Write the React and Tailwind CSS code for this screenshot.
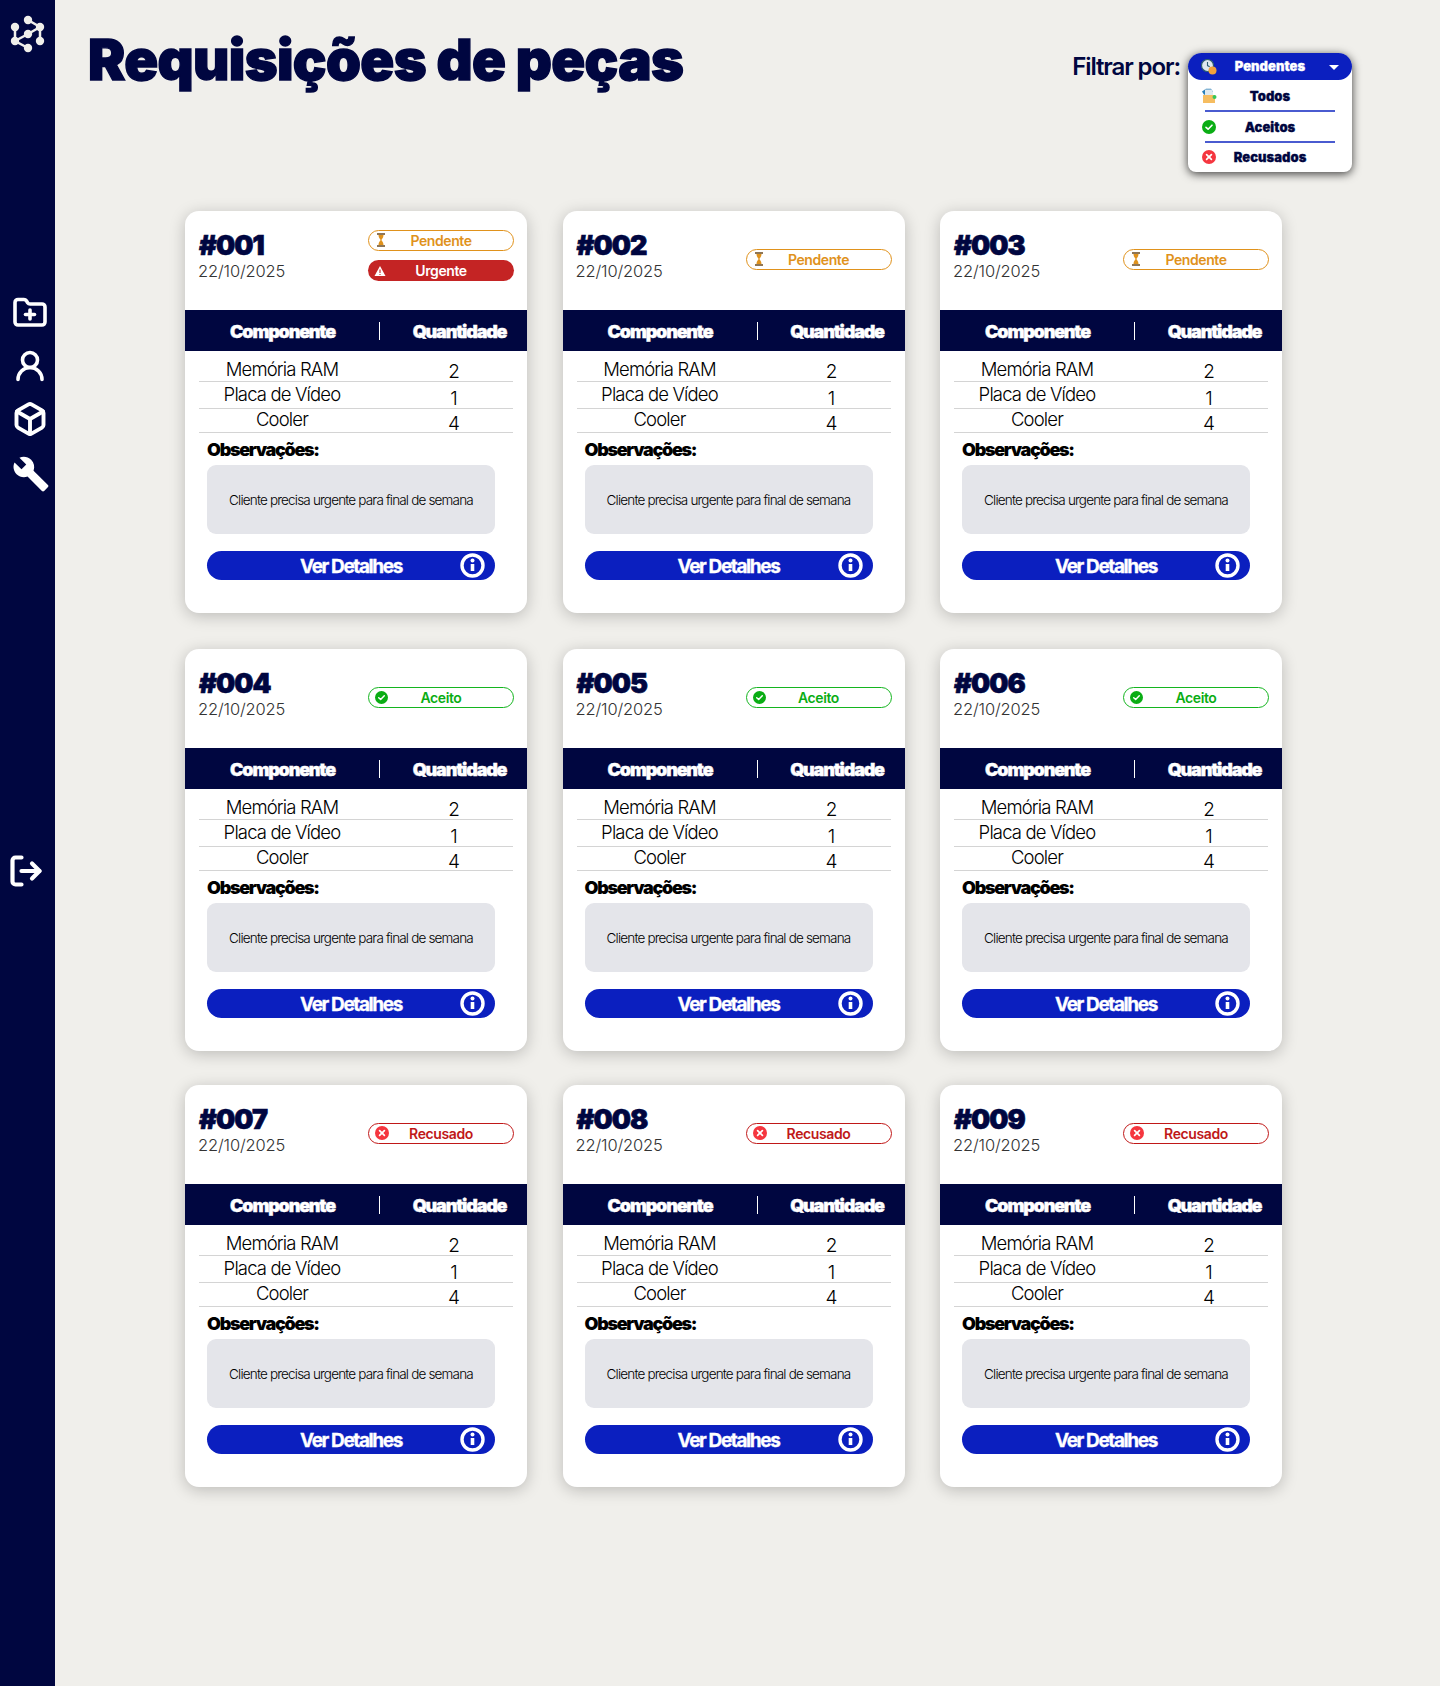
import { Box, FolderPlus, LogOut, UserRound } from "lucide-react";
import React from "react";
import { MdBuild } from "react-icons/md";

const requests = [
  { id: "#001", status: "pendente", urgent: true, gap: "" },
  { id: "#002", status: "pendente", gap: "" },
  { id: "#003", status: "pendente", gap: "" },
  { id: "#004", status: "aceito", gap: "mt-[36px]" },
  { id: "#005", status: "aceito", gap: "mt-[36px]" },
  { id: "#006", status: "aceito", gap: "mt-[36px]" },
  { id: "#007", status: "recusado", gap: "mt-[34px]" },
  { id: "#008", status: "recusado", gap: "mt-[34px]" },
  { id: "#009", status: "recusado", gap: "mt-[34px]" },
];

const rows = [
  { name: "Memória RAM", qty: 2, row: "h-[31px]", namePad: "pt-[8px]", qtyPad: "pt-[11px]" },
  { name: "Placa de Vídeo", qty: 1, row: "h-[27px]", namePad: "pt-[2px]", qtyPad: "pt-[7px]" },
  { name: "Cooler", qty: 4, row: "h-[24px]", namePad: "pt-0", qtyPad: "pt-[5px]" },
];

function Logo() {
  const nodes = [[28, 20], [40, 27], [15, 27], [28, 34], [15, 41], [40, 41], [28, 48]];
  return (
    <svg width="55" height="60" viewBox="0 0 55 60" className="block shrink-0" aria-hidden="true">
      <path d="M28 20 40 27 28 34 15 41 28 48M15 27V41M40 27V41" fill="none" stroke="#f0efeb" strokeWidth="2.5" />
      {nodes.map(([cx, cy]) => (
        <circle key={`${cx}-${cy}`} cx={cx} cy={cy} r="4.2" fill="#f0efeb" />
      ))}
    </svg>
  );
}

function Hourglass({ color = "#e0921c" }) {
  return (
    <svg width="12" height="14" viewBox="0 0 12 14" aria-hidden="true">
      <path d="M2 1h8M2 13h8" stroke="#6b4a1e" strokeWidth="1.4" />
      <path d="M3.5 2h5c0 3-1.8 4-2.1 5C6.7 8 8.5 9 8.5 12h-5c0-3 1.8-4 2.1-5C5.3 6 3.5 5 3.5 2Z" fill={color} />
    </svg>
  );
}

function Warning() {
  return (
    <svg width="12" height="12" viewBox="0 0 12 12" aria-hidden="true">
      <path d="M6 1 11.5 11H.5Z" fill="#fff" />
      <path d="M6 4.5V8M6 9v1" stroke="#c42424" strokeWidth="1.1" />
    </svg>
  );
}

function CheckDot({ size = 13 }) {
  return (
    <svg width={size} height={size} viewBox="0 0 14 14" aria-hidden="true">
      <circle cx="7" cy="7" r="7" fill="#0aad14" />
      <path d="M4 7.3 6.1 9.2 10 5.2" fill="none" stroke="#fff" strokeWidth="1.6" strokeLinecap="round" strokeLinejoin="round" />
    </svg>
  );
}

function CrossDot({ size = 14 }) {
  return (
    <svg width={size} height={size} viewBox="0 0 14 14" aria-hidden="true">
      <circle cx="7" cy="7" r="7" fill="#f5363f" />
      <path d="M4.6 4.6 9.4 9.4M9.4 4.6 4.6 9.4" stroke="#fff" strokeWidth="1.7" strokeLinecap="round" />
    </svg>
  );
}

function ClockIcon() {
  return (
    <svg width="16" height="16" viewBox="0 0 16 16" aria-hidden="true">
      <circle cx="6.5" cy="6.5" r="6" fill="#dfe9ef" stroke="#2e5f73" strokeWidth="1.2" />
      <path d="M6.5 3v3.6l2.2 1.2" fill="none" stroke="#2e5f73" strokeWidth="1.1" />
      <circle cx="11.5" cy="11.5" r="4" fill="#f0a13c" />
    </svg>
  );
}

function TrayIcon() {
  return (
    <svg width="16" height="16" viewBox="0 0 16 16" aria-hidden="true">
      <path d="M1 3.5 5 .8h5l2 3v3H3Z" fill="#2a7fb8" />
      <path d="M4 1.5h6.5l1.5 2.5v3.5H4Z" fill="#dfe9ef" />
      <path d="M2 7h12v8H2Z" fill="#f6bd60" />
      <circle cx="13.5" cy="9" r="2" fill="#34c759" />
    </svg>
  );
}

function InfoIcon() {
  return (
    <svg width="25" height="25" viewBox="0 0 25 25" aria-hidden="true">
      <circle cx="12.5" cy="12.5" r="10.5" fill="none" stroke="#fff" strokeWidth="3.4" />
      <path d="M12.5 11v7" stroke="#fff" strokeWidth="3.6" />
      <circle cx="12.5" cy="7.6" r="2" fill="#fff" />
    </svg>
  );
}

function Badge({ status }) {
  if (status === "pendente") {
    return (
      <div className="relative flex h-[21px] w-[146px] items-center justify-center rounded-full border border-[#e0921c] bg-white pb-px text-[14px] font-semibold tracking-[-0.4px] text-[#e0921c]">
        <span className="absolute left-[6px] flex"><Hourglass /></span>
        Pendente
      </div>
    );
  }
  if (status === "urgente") {
    return (
      <div className="relative flex h-[21px] w-[146px] items-center justify-center rounded-full bg-[#c42424] text-[14px] font-semibold tracking-[-0.4px] text-white">
        <span className="absolute left-[6px] flex"><Warning /></span>
        Urgente
      </div>
    );
  }
  if (status === "aceito") {
    return (
      <div className="relative flex h-[21px] w-[146px] items-center justify-center rounded-full border border-[#14b51f] bg-white text-[14px] font-semibold tracking-[-0.4px] text-[#0aad14]">
        <span className="absolute left-[6px] flex"><CheckDot /></span>
        Aceito
      </div>
    );
  }
  return (
    <div className="relative flex h-[21px] w-[146px] items-center justify-center rounded-full border border-[#c01818] bg-white pb-px text-[14px] font-semibold tracking-[-0.4px] text-[#c01818]">
      <span className="absolute left-[6px] flex"><CrossDot /></span>
      Recusado
    </div>
  );
}

function RequestCard({ request }) {
  return (
    <article className={`h-[402px] w-[342px] overflow-hidden rounded-[14px] bg-white shadow-[0_3px_16px_rgba(0,0,0,0.22)] ${request.gap}`}>
      <header className="flex h-[99px] justify-between pl-[14px] pr-[13px]">
        <div className="pt-[18px]">
          <h2 className="text-[27px] font-black leading-[34px] tracking-[-0.9px] text-[#000640] [-webkit-text-stroke:0.7px_#000640]">{request.id}</h2>
          <p className="-mt-[2px] -ml-px text-[16.5px] font-light leading-[20px] tracking-[-0.15px] text-[#333]">22/10/2025</p>
        </div>
        <div className={request.urgent ? "flex flex-col gap-[9px] pt-[19px]" : "flex flex-col pt-[38px]"}>
          <Badge status={request.status} />
          {request.urgent && <Badge status="urgente" />}
        </div>
      </header>

      <div className="grid h-[41px] grid-cols-[195px_1fr] items-center bg-[#000640] text-[18px] font-black tracking-[-1.2px] text-white [-webkit-text-stroke:0.4px_#fff]">
        <span className="relative flex h-full items-center justify-center pt-[2px]">
          Componente
          <span className="absolute right-0 top-[12px] h-[18px] w-px bg-white" />
        </span>
        <span className="pl-[12px] pt-[2px] text-center">Quantidade</span>
      </div>

      <div className="mx-[14px]">
        {rows.map((item) => (
          <div key={item.name} className={`grid grid-cols-[166px_1fr] items-start border-b border-[#d4d4d4] text-black ${item.row}`}>
            <span className={`text-center text-[18.5px] font-light leading-[20px] tracking-[-0.85px] ${item.namePad}`}>{item.name}</span>
            <span className={`pl-[30px] text-center text-[19px] font-light leading-[20px] ${item.qtyPad}`}>{item.qty}</span>
          </div>
        ))}
      </div>

      <div className="px-[22px] pt-[5px]">
        <h3 className="text-[18px] font-black leading-[24px] tracking-[-1.3px] text-black">Observações:</h3>
        <div className="mt-[3px] flex h-[69px] w-[288px] items-center justify-center rounded-[9px] bg-[#e4e5ea] pt-[2px] text-[13.5px] font-light tracking-[-0.82px] text-black">
          Cliente precisa urgente para final de semana
        </div>
        <button type="button" className="relative mt-[17px] flex h-[29px] w-[288px] items-center justify-center rounded-full bg-[#0b1fbf] pt-[3px] text-[19px] font-bold tracking-[-1.4px] text-white [-webkit-text-stroke:0.3px_#fff]">
          Ver Detalhes
          <span className="absolute right-[10px] top-[2px] flex"><InfoIcon /></span>
        </button>
      </div>
    </article>
  );
}

export default function App() {
  return (
    <div className="flex h-[1686px] bg-[#f0efeb] font-['Inter',sans-serif]">
      <aside className="flex w-[55px] shrink-0 flex-col bg-[#000640] text-white">
        <Logo />
        <nav className="mt-[235px] flex flex-col items-center">
          <FolderPlus size={36} strokeWidth={2.4} className="ml-[5px]" />
          <UserRound size={36} strokeWidth={2.4} className="ml-[5px] mt-[17px]" />
          <Box size={36} strokeWidth={2.6} className="ml-[5px] mt-[17px]" />
          <MdBuild size={38} className="ml-[7px] mt-[18px]" />
        </nav>
        <LogOut size={36} strokeWidth={2.8} className="ml-[8px] mt-[360px]" />
      </aside>

      <main className="relative min-w-0 flex-1">
        <div className="flex h-[211px] items-start justify-between pl-[33px] pr-[88px]">
          <h1 className="pt-[25px] text-[56px] font-black leading-[70px] tracking-[-0.65px] text-[#000640] [-webkit-text-stroke:1.4px_#000640]">
            Requisições de peças
          </h1>
          <div className="flex items-start gap-[8px] pt-[53px]">
            <span className="text-[24px] font-semibold leading-[27px] tracking-[-1.1px] text-[#000640]">Filtrar por:</span>
            <div className="h-[119px] w-[164px] rounded-b-[8px] rounded-t-[14px] bg-white shadow-[0_2px_10px_rgba(0,0,0,0.75)]">
              <div className="relative flex h-[27px] items-center justify-center rounded-full bg-[#0b1fbf] pt-px text-[13px] font-black tracking-[0.05px] text-white [-webkit-text-stroke:0.3px_#fff]">
                <span className="absolute left-[13px] flex"><ClockIcon /></span>
                Pendentes
                <svg width="10" height="5" viewBox="0 0 10 5" className="absolute right-[13px]" aria-hidden="true">
                  <path d="M0 0h10L5 5Z" fill="#fff" />
                </svg>
              </div>
              <div className="px-[17px] text-[13px] font-black tracking-[0.05px] text-[#000640] [-webkit-text-stroke:0.3px_#000640]">
                <div className="relative flex h-[32px] items-center justify-center border-b-2 border-[#4a5bd0] pt-[3px]">
                  <span className="absolute left-[-4px] top-[8px] flex"><TrayIcon /></span>
                  Todos
                </div>
                <div className="relative flex h-[31px] items-center justify-center border-b-2 border-[#4a5bd0] pt-[2px]">
                  <span className="absolute left-[-3px] top-[8px] flex"><CheckDot size={14} /></span>
                  Aceitos
                </div>
                <div className="relative flex h-[29px] items-center justify-center pt-px">
                  <span className="absolute left-[-3px] top-[7px] flex"><CrossDot /></span>
                  Recusados
                </div>
              </div>
            </div>
          </div>
        </div>

        <div className="ml-[130px] grid w-[1097px] grid-cols-[342px_342px_342px] justify-between">
          {requests.map((request) => (
            <RequestCard key={request.id} request={request} />
          ))}
        </div>
      </main>
    </div>
  );
}
